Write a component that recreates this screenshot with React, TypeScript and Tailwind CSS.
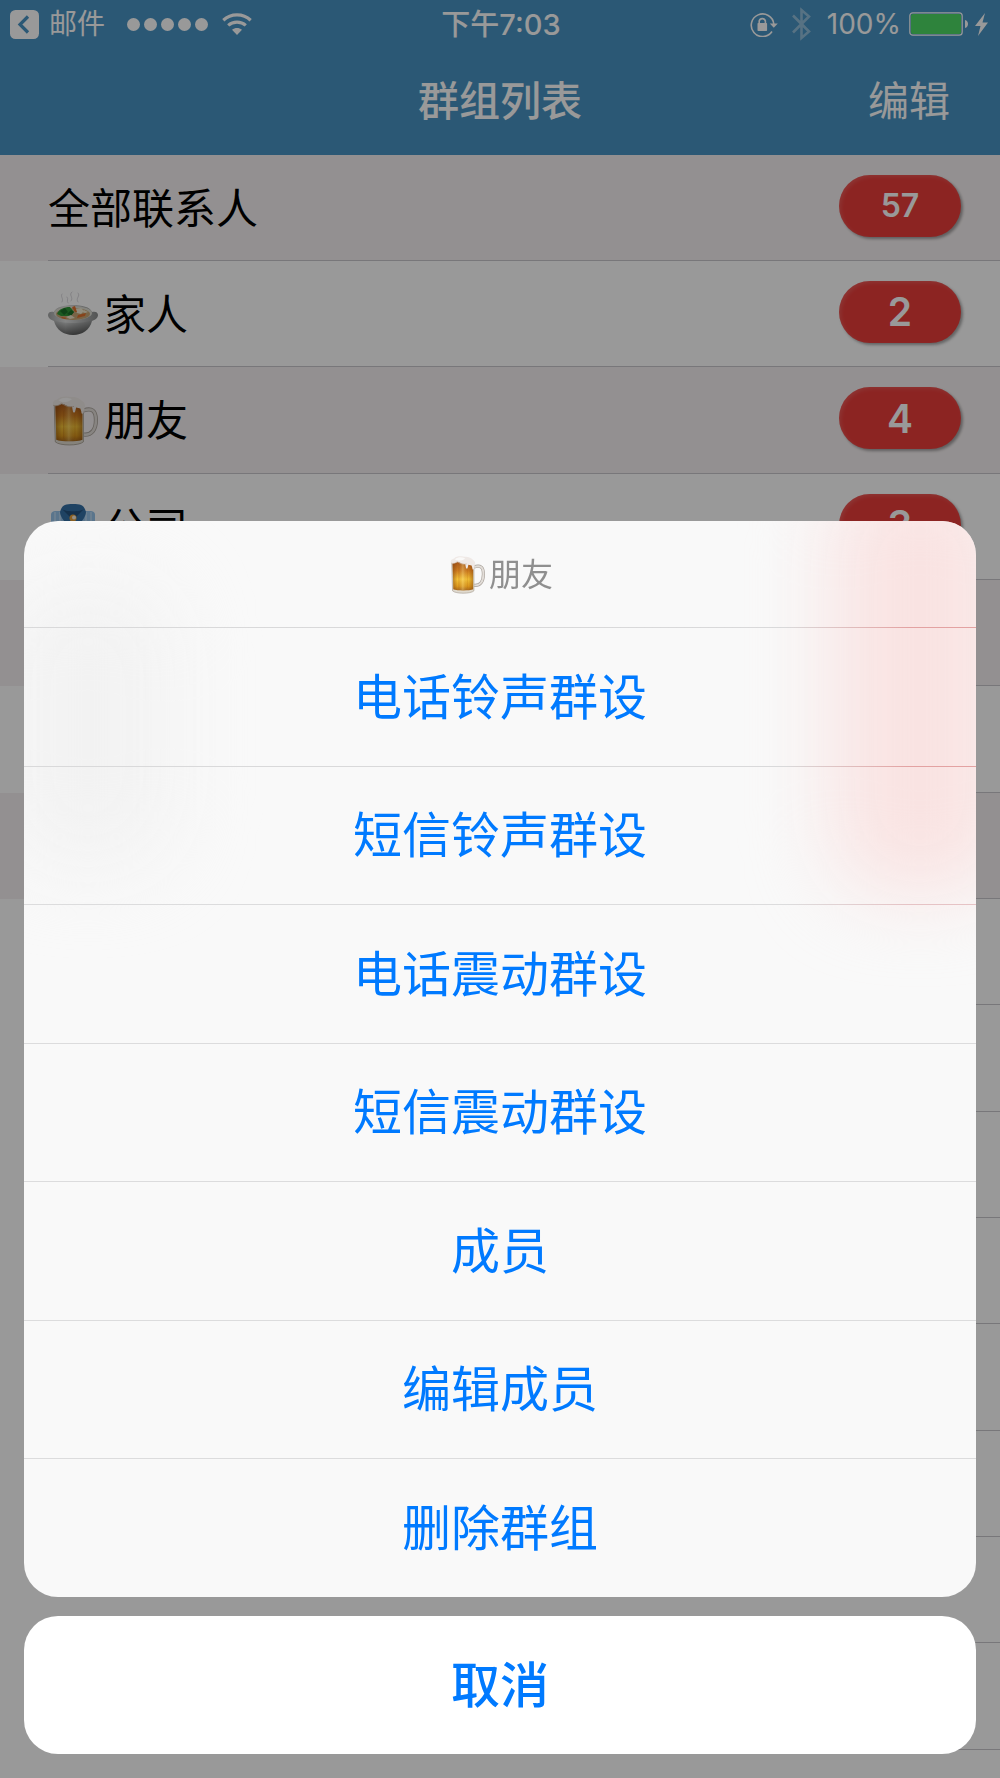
import { useState } from 'react';

interface Group {
  name: string;
  count: number;
  icon?: 'pot' | 'beer' | 'shirt';
}

const GROUPS: Group[] = [
  { name: '全部联系人', count: 57 },
  { name: '家人', count: 2, icon: 'pot' },
  { name: '朋友', count: 4, icon: 'beer' },
  { name: '公司', count: 3, icon: 'shirt' },
];

// the table keeps drawing separators past its data; only the first rows are striped
const TOTAL_ROWS = 16;
const STRIPED_ROWS = 7;

const ACTIONS = ['电话铃声群设', '短信铃声群设', '电话震动群设', '短信震动群设', '成员', '编辑成员', '删除群组'];

function PotIcon({ className }: { className: string }) {
  return (
    <svg viewBox="0 2 50 50" className={className} aria-hidden="true">
      <defs>
        <linearGradient id="pot-body" x1="0" x2="1" y1="0" y2="0">
          <stop offset="0" stopColor="#a4a6a6" />
          <stop offset="0.35" stopColor="#dcdede" />
          <stop offset="0.7" stopColor="#b0b2b2" />
          <stop offset="1" stopColor="#8a8c8c" />
        </linearGradient>
        <linearGradient id="pot-shade" x1="0" x2="0" y1="0" y2="1">
          <stop offset="0" stopColor="#000" stopOpacity="0" />
          <stop offset="1" stopColor="#000" stopOpacity="0.55" />
        </linearGradient>
      </defs>
      <g fill="none" stroke="#c3bfc8" strokeWidth="1" strokeLinecap="round" opacity="0.6">
        <path d="M14 6c-2 3 2 4 0 8M24 4c-4 3 2 5-1 9M30 5c3 3-3 5 0 9M19 9c2 2-1 4 1 6" />
      </g>
      <path d="M0 27c0-3 3-4 6-3 2-5 10-7 19-7s17 2 19 7c3-1 6 0 6 3s-3 5-6 6c-2 9-10 14-19 14S8 42 6 33c-3-1-6-3-6-6z" fill="url(#pot-body)" />
      <path d="M6 32c2 10 10 15 19 15s17-5 19-15c-8 4-30 4-38 0z" fill="url(#pot-shade)" />
      <ellipse cx="25" cy="25" rx="19" ry="7" fill="#dddcd2" />
      <ellipse cx="25" cy="26" rx="17" ry="6" fill="#c9a777" />
      <path d="M9 26c2-5 7-7 13-7l4 5-4 4-9 0z" fill="#2f9637" />
      <path d="M12 23l5-3 3 4-4 3zM19 26l4-4 3 2-3 4z" fill="#1c6f28" />
      <path d="M27 21l6-1 3 3-3 3-4-1z" fill="#f1ead2" />
      <path d="M24 19l3-1 2 6-2 0zM30 27l8-2-1 3-8 2zM14 29l5 1-2 1-4-1z" fill="#e2702d" />
      <path d="M18 29l5-2 4 3-5 1zM36 22l4 2-3 1-3-1z" fill="#efe6cc" />
    </svg>
  );
}

function BeerIcon({ className }: { className: string }) {
  return (
    <svg viewBox="-1 2 48 48" className={className} aria-hidden="true">
      <defs>
        <linearGradient id="beer-fill" x1="0" x2="0" y1="0" y2="1">
          <stop offset="0" stopColor="#a9581a" />
          <stop offset="0.3" stopColor="#cf7d20" />
          <stop offset="0.6" stopColor="#f6c437" />
          <stop offset="0.85" stopColor="#dd9a1d" />
          <stop offset="1" stopColor="#a9681a" />
        </linearGradient>
        <linearGradient id="beer-side" x1="0" x2="1" y1="0" y2="0">
          <stop offset="0" stopColor="#7a3c0c" stopOpacity="0.5" />
          <stop offset="0.25" stopColor="#7a3c0c" stopOpacity="0" />
          <stop offset="0.5" stopColor="#fff3b0" stopOpacity="0.3" />
          <stop offset="0.75" stopColor="#7a3c0c" stopOpacity="0" />
          <stop offset="1" stopColor="#7a3c0c" stopOpacity="0.45" />
        </linearGradient>
      </defs>
      <path d="M33 16c8-3 12 0 12 9 0 9-4 15-12 14" fill="none" stroke="#aaa39c" strokeWidth="4" />
      <path d="M33 16c8-3 12 0 12 9 0 9-4 15-12 14" fill="none" stroke="#e2ddd8" strokeWidth="2.400" />
      <path d="M5 10h28v36c-4 4-23 4-27 0z" fill="#e0dacf" stroke="#a49c90" strokeWidth="0.800" />
      <path d="M6 10h26v34c-5 2-20 2-25 0z" fill="url(#beer-fill)" />
      <path d="M6 10h26v34c-5 2-20 2-25 0z" fill="url(#beer-side)" />
      <path d="M14 16v27M25 16v27" stroke="#a75a12" strokeWidth="1" opacity="0.25" />
      <path
        d="M4 11c-1-4 1-5 4-6 3-3 9-3 14-2 5 0 8 2 10 4 3 2 3 5 2 7l-1 4c-1 2-2 1-2-1l-1-3-4-1-1 4c0 1-2 1-2 0l-1-5c-4 1-7-2-9-3-3 2-7 3-9 2z"
        fill="#efe9e6"
      />
      <path d="M9 6c4-3 9-3 13-1-4 3-9 4-13 1z" fill="#fff" opacity="0.7" />
      <path d="M4 11c3 1 6 0 8-2 4 3 8 4 12 3" fill="none" stroke="#cdb8a4" strokeWidth="0.800" />
    </svg>
  );
}

function ShirtIcon({ className }: { className: string }) {
  return (
    <svg viewBox="0 0 50 50" className={className} aria-hidden="true">
      <path d="M3 12c0-3 2-4 5-4h34c3 0 5 1 5 4v34c0 2-1 3-3 3H6c-2 0-3-1-3-3z" fill="#97c4ea" />
      <path d="M7 9v40M12 9v40M38 9v40M43 9v40" stroke="#bcd9f2" strokeWidth="1.500" />
      <path d="M12 9c2-7 5-8 13-8s11 1 13 8c0 5-6 12-10 15l-3-3-3 3c-4-3-10-10-10-15z" fill="#3570a6" />
      <path d="M14 6c3 3 19 3 22 0l-8 8h-6z" fill="#24527f" />
      <path d="M25 16v33" stroke="#2d6296" strokeWidth="1.500" />
      <circle cx="25" cy="15" r="3.500" fill="#e6a13a" />
      <circle cx="26" cy="14.500" r="2" fill="#f7efe0" />
    </svg>
  );
}

function GroupIcon({ icon, className }: { icon: NonNullable<Group['icon']>; className: string }) {
  if (icon === 'pot') return <PotIcon className={className} />;
  if (icon === 'beer') return <BeerIcon className={className} />;
  return <ShirtIcon className={className} />;
}

function StatusBar() {
  return (
    <div className="grid h-12 grid-cols-[1fr_auto_1fr] items-center pr-3 pl-[10px] leading-none">
      <div className="flex items-center">
        <a href="#mail" className="flex items-center gap-[10px] text-[28px]">
          <svg viewBox="0 0 29 29" className="size-[29px]" aria-hidden="true">
            <rect width="29" height="29" rx="5.500" fill="#fff" />
            <path d="M18 6.500L10 14.500L18 22.500" fill="none" stroke="#4893c3" strokeWidth="3.200" />
          </svg>
          邮件
        </a>
        <div className="ml-[22px] flex gap-1" role="img" aria-label="信号">
          {[0, 1, 2, 3, 4].map((i) => (
            <span key={i} className="size-[13px] rounded-full bg-white" />
          ))}
        </div>
        <svg viewBox="0 0 30 22" className="ml-[14px] h-[22px] w-[30px]" aria-hidden="true">
          <g fill="none" stroke="#fff">
            <path d="M1.300 7.200C9 .2 21 .2 28.700 7.200" strokeWidth="3.200" />
            <path d="M6.200 12.400c5-4.400 12.600-4.400 17.600 0" strokeWidth="3.200" />
          </g>
          <path d="M10 16.800c3-2.400 7-2.400 10 0L15 22z" fill="#fff" />
        </svg>
      </div>
      <time className="pl-1 text-[29px] font-medium">下午7:03</time>
      <div className="flex items-center justify-end">
        <svg viewBox="0 0 28 25" className="h-[25px] w-7" aria-hidden="true">
          <path d="M22 19.500A11.300 11.300 0 1 1 23.800 12" fill="none" stroke="#fff" strokeWidth="1.600" />
          <path d="M19.800 11.500h8l-4 4.200z" fill="#fff" />
          <rect x="7.500" y="11" width="9.600" height="8" rx="0.800" fill="#fff" />
          <path d="M9.200 11.500V9a3.200 3.200 0 0 1 6.200 0v2.500" fill="none" stroke="#fff" strokeWidth="1.600" />
        </svg>
        <svg viewBox="0 0 19 34" className="ml-[14px] h-[34px] w-[19px] opacity-40" aria-hidden="true">
          <path d="M1 8.500L17 24.500L9.500 31V3L17 9.500L1 25.500" fill="none" stroke="#fff" strokeWidth="2.600" />
        </svg>
        <span className="ml-4 text-[28px]">100%</span>
        <svg viewBox="0 0 60 24" className="ml-2 h-6 w-[60px]" aria-hidden="true">
          <rect x="0.800" y="0.800" width="52.400" height="22.400" rx="3" fill="none" stroke="#fff" strokeWidth="1.200" />
          <rect x="2" y="2" width="50" height="20" rx="2" fill="#4dda64" />
          <path d="M56 8c4 1 4 7 0 8z" fill="#fff" />
        </svg>
        <svg viewBox="0 0 13 23" className="ml-[6px] h-[23px] w-[13px]" aria-hidden="true">
          <path d="M10 0L0 13h5.500L3 23L13 9.500H7.500z" fill="#fff" />
        </svg>
      </div>
    </div>
  );
}

function CountBadge({ count }: { count: number }) {
  return (
    <span
      className={`mb-1 flex h-[62px] w-[122px] items-center justify-center rounded-full bg-[#e93c39] leading-none font-semibold text-white shadow-[2px_2px_3px_rgba(0,0,0,0.35),inset_2px_2px_4px_rgba(255,255,255,0.15)] ${count > 9 ? 'text-[32px]' : 'text-[39px]'}`}
    >
      {count}
    </span>
  );
}

function GroupList() {
  return (
    <ul>
      {Array.from({ length: TOTAL_ROWS }, (_, i) => {
        const group: Group | undefined = GROUPS[i];
        return (
          <li key={i} className={`h-[106px] pl-12 nth-[3n]:h-[107px] ${i < STRIPED_ROWS ? 'odd:bg-[#f6f1f2]' : ''}`}>
            <div className="flex h-full items-center justify-between border-b border-[#c8c7cc] pr-[39px]">
              {group ? (
                <>
                  <span className="flex items-center gap-[6px] pt-[2px] text-[42px] leading-none text-black">
                    {group.icon ? <GroupIcon icon={group.icon} className="size-[50px]" /> : null}
                    {group.name}
                  </span>
                  <CountBadge count={group.count} />
                </>
              ) : null}
            </div>
          </li>
        );
      })}
    </ul>
  );
}

function ActionSheet({ onClose }: { onClose: () => void }) {
  return (
    <div className="fixed inset-0 flex flex-col justify-end gap-[19px] bg-black/40 p-6">
      <section role="dialog" aria-label="朋友" className="relative overflow-hidden rounded-[34px] bg-[#f9f9f9]">
        {/* colour of the list showing through the frosted panel */}
        <div className="absolute -top-12 -right-8 h-[420px] w-44 rounded-[60px] bg-[#f9e3e2] blur-[40px]" />
        <div className="absolute top-16 -left-4 h-[280px] w-40 rounded-[60px] bg-[#f2f2f2] blur-[40px]" />
        <div className="relative">
          <h2 className="flex h-[106px] items-center justify-center gap-1 pt-[2px] text-[32px] leading-none text-[#8f8f8f]">
            <BeerIcon className="size-[38px]" />
            朋友
          </h2>
          {ACTIONS.map((label, i) => (
            <div key={label} className="flex h-[138px] flex-col even:h-[139px]">
              <div
                className={`h-px shrink-0 ${i < 2 ? 'bg-linear-to-r from-[#d9d9da] from-80% to-[#e3a2a2] to-93%' : i === 2 ? 'bg-linear-to-r from-[#dcdcdd] from-80% to-[#e6c3c5] to-93%' : 'bg-[#dcdcdd]'}`}
              />
              <button
                type="button"
                onClick={onClose}
                className="flex w-full flex-1 items-center justify-center text-[49px] leading-none text-[#007aff]"
              >
                {label}
              </button>
            </div>
          ))}
        </div>
      </section>
      <button
        type="button"
        onClick={onClose}
        className="h-[138px] shrink-0 rounded-[34px] bg-white text-[49px] leading-none font-medium text-[#007aff]"
      >
        取消
      </button>
    </div>
  );
}

export default function App() {
  const [sheetOpen, setSheetOpen] = useState(true);

  return (
    <div className="h-screen overflow-hidden bg-white font-['Inter','Noto_Sans_CJK_SC',sans-serif]">
      <header className="bg-[#4893c3] text-white">
        <StatusBar />
        <div className="grid h-[107px] grid-cols-[1fr_auto_1fr] items-center px-[50px] text-[41px] leading-none">
          <h1 className="col-start-2 font-medium">群组列表</h1>
          <button type="button" onClick={() => setSheetOpen(true)} className="justify-self-end">
            编辑
          </button>
        </div>
      </header>
      <GroupList />
      {sheetOpen ? <ActionSheet onClose={() => setSheetOpen(false)} /> : null}
    </div>
  );
}
